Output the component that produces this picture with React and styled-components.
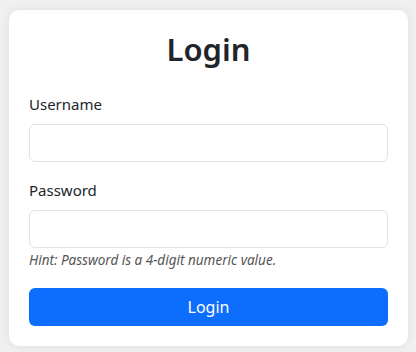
import React from "react"
import styled, { createGlobalStyle } from "styled-components"

const GlobalStyle = createGlobalStyle`
  * {
    box-sizing: border-box;
  }

  body {
    margin: 0;
    background: #f0f0f0;
    font-family: "Noto Sans", "Open Sans", sans-serif;
    color: #212529;
  }
`

const Page = styled.div`
  padding: 10px 8px 6px 9px;
`

const Card = styled.form`
  background: #fff;
  border-radius: 10px;
  box-shadow: 0 0 10px rgba(0, 0, 0, 0.08);
  padding: 20px;
`

const Title = styled.h2`
  margin: 0 0 24px;
  font-size: 31px;
  font-weight: 600;
  line-height: 38px;
  text-align: center;
  color: #212529;
`

const Field = styled.div`
  margin-bottom: ${(p) => p.$gap || 16}px;
`

const Label = styled.label`
  display: block;
  margin-bottom: 8px;
  font-size: 15px;
  line-height: 24px;
`

const Input = styled.input`
  display: block;
  width: 100%;
  height: 38px;
  padding: 6px 12px;
  font: inherit;
  font-size: 16px;
  border: 1px solid #dee2e6;
  border-radius: 6px;
  background: #fff;
  outline: none;
`

const Hint = styled.small`
  display: block;
  margin-top: 2px;
  font-size: 13.5px;
  line-height: 21px;
  font-style: italic;
  color: #555;
`

const Button = styled.button`
  display: block;
  width: 100%;
  height: 38px;
  border: none;
  border-radius: 6px;
  background: #0d6efd;
  color: #fff;
  font: inherit;
  font-size: 16px;
  cursor: pointer;
`

export default function App() {
  return (
    <Page>
      <GlobalStyle />
      <Card onSubmit={(e) => e.preventDefault()}>
        <Title>Login</Title>
        <Field>
          <Label htmlFor="username">Username</Label>
          <Input id="username" type="text" />
        </Field>
        <Field $gap={17}>
          <Label htmlFor="password">Password</Label>
          <Input id="password" type="password" />
          <Hint>Hint: Password is a 4-digit numeric value.</Hint>
        </Field>
        <Button type="submit">Login</Button>
      </Card>
    </Page>
  )
}
